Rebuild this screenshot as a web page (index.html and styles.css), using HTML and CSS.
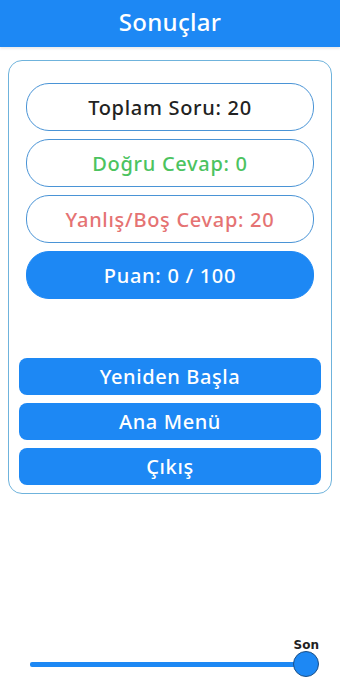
FILE: index.html
```html
<!DOCTYPE html>
<html lang="tr">
  <head>
    <meta charset="UTF-8" />
    <meta name="viewport" content="width=device-width, initial-scale=1.0" />
    <title>Sonuçlar</title>
    <link rel="stylesheet" href="styles.css">
  </head>
  <body>
    <div class="page">
      <!-- Header -->
      <div class="header">Sonuçlar</div>

      <!-- Result card -->
      <div class="card">
        <div class="stats">
          <div class="stat stat-total">Toplam Soru: 20</div>
          <div class="stat stat-correct">Doğru Cevap: 0</div>
          <div class="stat stat-wrong">Yanlış/Boş Cevap: 20</div>
          <div class="stat stat-score">Puan: 0 / 100</div>
        </div>

        <div class="actions">
          <button class="action-button">Yeniden Başla</button>
          <button class="action-button">Ana Menü</button>
          <button class="action-button">Çıkış</button>
        </div>
      </div>

      <!-- Progress slider -->
      <div class="slider">
        <div class="slider-label">Son</div>
        <div class="slider-track">
          <span class="slider-thumb"></span>
        </div>
      </div>
    </div>
  </body>
</html>
```

FILE: styles.css
```css
body {
  font-family: "Noto Sans", Arial, sans-serif;
  margin: 0;
  padding: 0;
  background-color: #fff;
}
.page {
  height: 680px;
  display: flex;
  flex-direction: column;
}
.header {
  background-color: #1d88f4;
  color: #fff;
  height: 47px;
  line-height: 44px;
  text-align: center;
  font-size: 24px;
  font-weight: 500;
  letter-spacing: 0.3px;
  box-shadow: 0 2px 2px rgba(0, 0, 0, 0.08);
}
.card {
  margin: 13px 8px 0;
  border: 1px solid #6fb3dc;
  border-radius: 14px;
  padding: 10px 10px 8px;
}
.stats {
  display: flex;
  flex-direction: column;
  gap: 8px;
  margin: 12px 7px 0;
}
.stat {
  height: 46px;
  border: 1px solid #4a94d6;
  border-radius: 23px;
  display: flex;
  align-items: center;
  justify-content: center;
  font-size: 20px;
  font-weight: 500;
  letter-spacing: 0.7px;
}
.stat-total {
  color: #222;
}
.stat-correct {
  color: #4cc35f;
}
.stat-wrong {
  color: #e57373;
}
.stat-score {
  background-color: #1d88f4;
  border-color: #1d88f4;
  color: #fff;
}
.actions {
  display: flex;
  flex-direction: column;
  gap: 8px;
  margin-top: 59px;
}
.action-button {
  height: 37px;
  background-color: #1d88f4;
  color: #fff;
  border: none;
  border-radius: 8px;
  font-family: inherit;
  font-size: 20px;
  font-weight: 500;
  letter-spacing: 0.6px;
  cursor: pointer;
}
.slider {
  margin-top: auto;
  padding: 0 34px 13px 30px;
}
.slider-label {
  text-align: right;
  margin-right: -13px;
  font-family: "DejaVu Sans", sans-serif;
  font-size: 12px;
  font-weight: 600;
  color: #222;
  line-height: 14px;
  margin-bottom: 10px;
}
.slider-track {
  position: relative;
  height: 5px;
  background-color: #1d88f4;
  border-radius: 2px;
}
.slider-thumb {
  position: absolute;
  right: -13px;
  top: -11px;
  width: 24px;
  height: 24px;
  border-radius: 50%;
  background-color: #1d88f4;
  border: 1px solid #1b4f86;
}
```
